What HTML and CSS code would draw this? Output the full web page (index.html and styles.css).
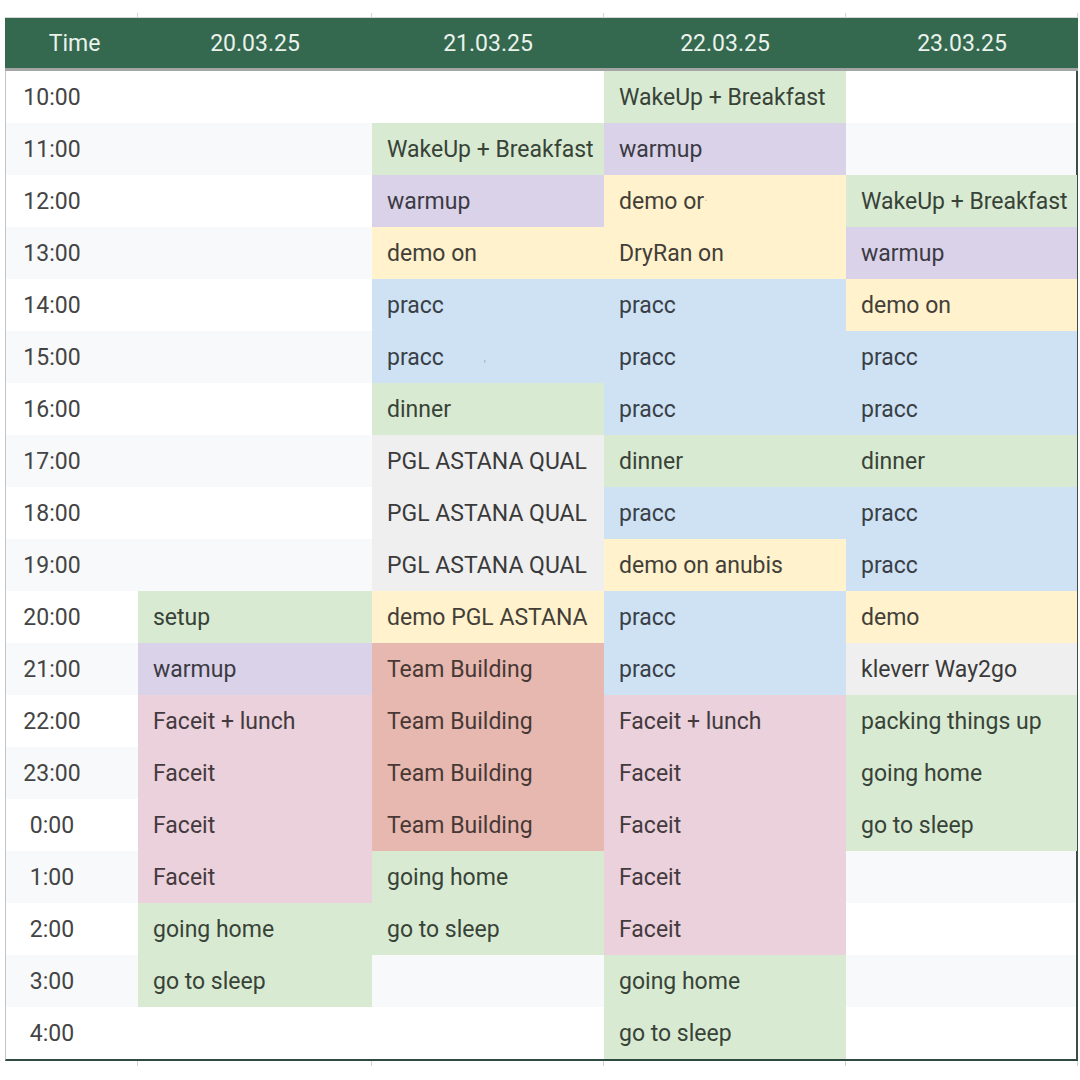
FILE: index.html
```html
<!DOCTYPE html>
<html>
<head>
<meta charset="utf-8">
<link rel="stylesheet" href="styles.css">
</head>
<body>
<div class="sheet">
  <div class="ticks"><span></span><span></span><span></span><span></span><span></span></div>
  <div class="row head">
    <div class="hc">Time</div>
    <div class="hc">20.03.25</div>
    <div class="hc">21.03.25</div>
    <div class="hc">22.03.25</div>
    <div class="hc">23.03.25</div>
  </div>
  <div class="body">
    <div class="row"><div class="t">10:00</div><div class="c"></div><div class="c"></div><div class="c g">WakeUp + Breakfast</div><div class="c"></div></div>
    <div class="row"><div class="t">11:00</div><div class="c"></div><div class="c g">WakeUp + Breakfast</div><div class="c p">warmup</div><div class="c"></div></div>
    <div class="row"><div class="t">12:00</div><div class="c"></div><div class="c p">warmup</div><div class="c y">demo or<span class="cut">·</span></div><div class="c g">WakeUp + Breakfast</div></div>
    <div class="row"><div class="t">13:00</div><div class="c"></div><div class="c y">demo on</div><div class="c y">DryRan on</div><div class="c p">warmup</div></div>
    <div class="row"><div class="t">14:00</div><div class="c"></div><div class="c b">pracc</div><div class="c b">pracc</div><div class="c y">demo on</div></div>
    <div class="row"><div class="t">15:00</div><div class="c"></div><div class="c b">pracc <span class="mark">,</span></div><div class="c b">pracc</div><div class="c b">pracc</div></div>
    <div class="row"><div class="t">16:00</div><div class="c"></div><div class="c g">dinner</div><div class="c b">pracc</div><div class="c b">pracc</div></div>
    <div class="row"><div class="t">17:00</div><div class="c"></div><div class="c k">PGL ASTANA QUAL</div><div class="c g">dinner</div><div class="c g">dinner</div></div>
    <div class="row"><div class="t">18:00</div><div class="c"></div><div class="c k">PGL ASTANA QUAL</div><div class="c b">pracc</div><div class="c b">pracc</div></div>
    <div class="row"><div class="t">19:00</div><div class="c"></div><div class="c k">PGL ASTANA QUAL</div><div class="c y">demo on anubis</div><div class="c b">pracc</div></div>
    <div class="row"><div class="t">20:00</div><div class="c g">setup</div><div class="c y">demo PGL ASTANA</div><div class="c b">pracc</div><div class="c y">demo</div></div>
    <div class="row"><div class="t">21:00</div><div class="c p">warmup</div><div class="c r">Team Building</div><div class="c b">pracc</div><div class="c k">kleverr Way2go</div></div>
    <div class="row"><div class="t">22:00</div><div class="c m">Faceit + lunch</div><div class="c r">Team Building</div><div class="c m">Faceit + lunch</div><div class="c g">packing things up</div></div>
    <div class="row"><div class="t">23:00</div><div class="c m">Faceit</div><div class="c r">Team Building</div><div class="c m">Faceit</div><div class="c g">going home</div></div>
    <div class="row"><div class="t">0:00</div><div class="c m">Faceit</div><div class="c r">Team Building</div><div class="c m">Faceit</div><div class="c g">go to sleep</div></div>
    <div class="row"><div class="t">1:00</div><div class="c m">Faceit</div><div class="c g">going home</div><div class="c m">Faceit</div><div class="c"></div></div>
    <div class="row"><div class="t">2:00</div><div class="c g">going home</div><div class="c g">go to sleep</div><div class="c m">Faceit</div><div class="c"></div></div>
    <div class="row"><div class="t">3:00</div><div class="c g">go to sleep</div><div class="c"></div><div class="c g">going home</div><div class="c"></div></div>
    <div class="row"><div class="t">4:00</div><div class="c"></div><div class="c"></div><div class="c g">go to sleep</div><div class="c"></div></div>
  </div>
  <div class="ticks bottom"><span></span><span></span><span></span><span></span><span></span></div>
</div>
</body>
</html>
```
FILE: styles.css
```css
html, body {
  margin: 0;
  padding: 0;
  background: #ffffff;
}
body {
  font-family: Roboto, "Liberation Sans", sans-serif;
  width: 1080px;
  height: 1080px;
  overflow: hidden;
}
.sheet {
  margin: 13px 0 0 5px;
  width: 1073px;
}
.ticks {
  display: grid;
  grid-template-columns: 133px 234px 232px 242px 232px;
  height: 4px;
}
.ticks span {
  border-right: 1px solid #d4d4d4;
}
.row {
  display: grid;
  grid-template-columns: 133px 234px 232px 242px 232px;
  height: 52px;
}
.head {
  height: 50px;
  background: #34684f;
  border-top: 1px solid #d6d6d6;
  border-bottom: 3px solid #a3a6a4;
}
.hc {
  color: #eaf2ec;
  font-size: 23px;
  display: flex;
  align-items: center;
  justify-content: center;
  padding-top: 1px;
}
.hc:first-child {
  padding-left: 6px;
}
.body {
  border-left: 1px solid #c4c4c4;
  border-right: 2px solid #3d4c46;
  border-bottom: 2px solid #2f4b41;
}
.body .row {
  grid-template-columns: 132px 234px 232px 242px 231px;
}
.body .row:nth-child(even) {
  background: #f8f9fa;
}
.t {
  color: #444444;
  font-size: 23px;
  display: flex;
  align-items: center;
  justify-content: center;
  padding-right: 40px;
}
.c {
  color: #3c3f3c;
  font-size: 23px;
  display: flex;
  align-items: center;
  padding-left: 15px;
  white-space: nowrap;
  overflow: hidden;
}
.g { background: #d9ead3; color: #384338; }
.p { background: #d9d2e9; color: #3c3a43; }
.y { background: #fff2cc; color: #433f38; }
.b { background: #cfe2f3; color: #394047; }
.k { background: #efefef; color: #3a3a3a; }
.m { background: #ead1dc; color: #443a3e; }
.r { background: #e6b8af; color: #483835; }
.cut {
  color: #c8c2b0;
  font-size: 14px;
}
.mark {
  color: #9aa6b0;
  font-size: 10px;
  margin-left: 40px;
}
.bottom {
  height: 5px;
}
```
